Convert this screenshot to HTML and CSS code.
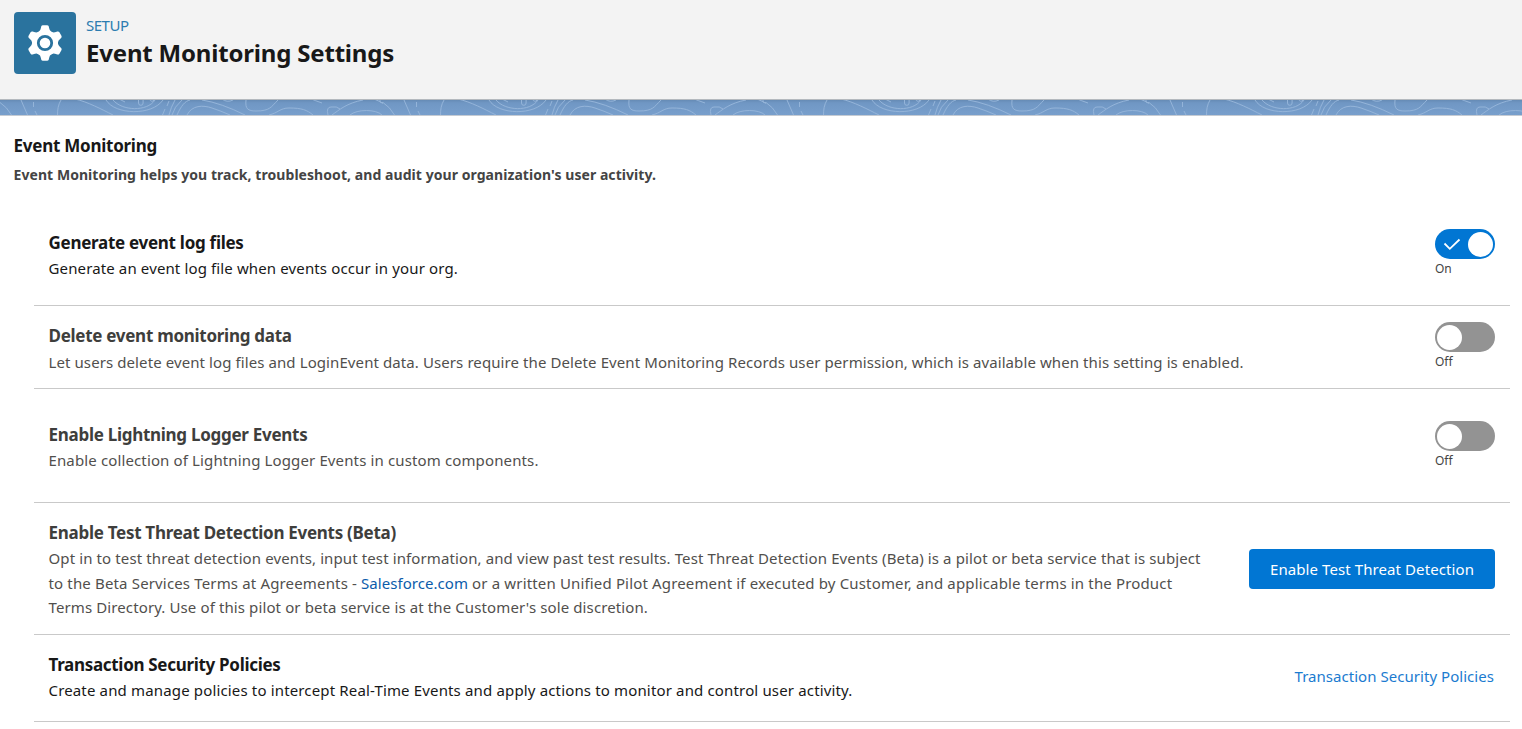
FILE: index.html
```html
<!DOCTYPE html>
<html lang="en">
<head>
<meta charset="utf-8">
<title>Event Monitoring Settings</title>
<link rel="stylesheet" href="styles.css">
</head>
<body>
<header class="page-header">
  <div class="header-icon">
    <svg width="62" height="62" viewBox="0 0 62 62">
      <g fill="#fff">
        <circle cx="31" cy="31" r="13"/>
        <g id="tooth-pair"><path d="M24.500 20Q26.600 18.500 26.900 16L27.200 14.600Q27.600 13.200 29 13.200H33Q34.400 13.200 34.800 14.600L35.100 16Q35.400 18.500 37.500 20V42Q35.400 43.500 35.100 46L34.800 47.400Q34.400 48.800 33 48.800H29Q27.600 48.800 27.200 47.400L26.900 46Q26.600 43.500 24.500 42Z"/></g>
        <use href="#tooth-pair" transform="rotate(60 31 31)"/>
        <use href="#tooth-pair" transform="rotate(120 31 31)"/>
      </g>
      <circle cx="31" cy="31" r="6.700" fill="#fff" stroke="#2a739e" stroke-width="2.800"/>
    </svg>
  </div>
  <div class="header-text">
    <div class="eyebrow">SETUP</div>
    <h1 class="page-title">Event Monitoring Settings</h1>
  </div>
</header>
<div class="band">
  <svg width="1522" height="15">
    <defs>
      <pattern id="contours" width="383" height="15" patternUnits="userSpaceOnUse">
        <g fill="none" stroke="#94b4d9" stroke-width="1">
          <path d="M0 2.500Q7 7 11.500 15"/>
          <path d="M21 0L27.500 15"/>
          <path d="M33.500 2v5M35 11l2 4"/>
          <path d="M61 0C58 5 57.500 10 57.500 15"/>
          <path d="M75-1C88 2 101 9 113 15"/>
          <path d="M106 0C115 15 152 16 163 0"/>
          <path d="M113 0C122 11 147 12 155 0"/>
          <path d="M119-1L125 2"/>
          <path d="M138.500 0v3a2.300 2.300 0 0 0 4.600 0v-3"/>
          <path d="M149-1Q152 3 154 0"/>
          <path d="M169 1l-2 5M165 9l-2.500 6"/>
          <path d="M175 0Q171 7 169 15M182 0Q174 7 172 15"/>
          <path d="M177 15C181 6 185 1 190 0"/>
          <path d="M187 15C192 5 203 5 212 8Q221 11 230 15"/>
          <path d="M202 0Q221 3 245 15"/>
          <path d="M222-1Q227 3 233 0"/>
          <path d="M246 0C245 9 248 11 256 11C270 11 271 7 278 0"/>
          <path d="M269 15C278 13 280 8 289 8C302 8 307 10 313 15"/>
          <path d="M309-2Q316 1 322 3"/>
          <path d="M328 15Q326 7 331 7Q337 6 340 9"/>
          <path d="M332 15C339 10 347 3 363 0M374-1Q388 4 394 15"/>
          <path d="M350 15C357 9 376 9 382 15"/>
          <path d="M380 0v2q1 1 3 .5"/>
        </g>
      </pattern>
    </defs>
    <rect width="1522" height="15" fill="url(#contours)"/>
  </svg>
</div>
<main class="content">
  <h2 class="section-title">Event Monitoring</h2>
  <p class="section-sub">Event Monitoring helps you track, troubleshoot, and audit your organization's user activity.</p>
  <div class="settings">
    <section class="row row-generate strong">
      <div class="row-text">
        <h3 class="row-title">Generate event log files</h3>
        <p class="row-desc">Generate an event log file when events occur in your org.</p>
      </div>
      <div class="toggle-box">
        <div class="toggle on">
          <svg class="check" width="18" height="14" viewBox="0 0 18 14"><path d="M1.500 6.500L6.800 11.800L16.500 2.500" fill="none" stroke="#fff" stroke-width="1.800"/></svg>
          <span class="knob"></span>
        </div>
        <div class="toggle-label">On</div>
      </div>
    </section>
    <section class="row row-delete">
      <div class="row-text">
        <h3 class="row-title">Delete event monitoring data</h3>
        <p class="row-desc">Let users delete event log files and LoginEvent data. Users require the Delete Event Monitoring Records user permission, which is available when this setting is enabled.</p>
      </div>
      <div class="toggle-box">
        <div class="toggle"><span class="knob"></span></div>
        <div class="toggle-label">Off</div>
      </div>
    </section>
    <section class="row row-logger">
      <div class="row-text">
        <h3 class="row-title">Enable Lightning Logger Events</h3>
        <p class="row-desc">Enable collection of Lightning Logger Events in custom components.</p>
      </div>
      <div class="toggle-box">
        <div class="toggle"><span class="knob"></span></div>
        <div class="toggle-label">Off</div>
      </div>
    </section>
    <section class="row row-threat">
      <div class="row-text">
        <h3 class="row-title">Enable Test Threat Detection Events (Beta)</h3>
        <p class="row-desc">Opt in to test threat detection events, input test information, and view past test results. Test Threat Detection Events (Beta) is a pilot or beta service that is subject<br><span class="terms">to the Beta Services Terms at Agreements - <a class="inline-link">Salesforce.com</a> or a written Unified Pilot Agreement if executed by Customer, and applicable terms in the Product</span><br>Terms Directory. Use of this pilot or beta service is at the Customer's sole discretion.</p>
      </div>
      <button class="button">Enable Test Threat Detection</button>
    </section>
    <section class="row row-policies strong">
      <div class="row-text">
        <h3 class="row-title">Transaction Security Policies</h3>
        <p class="row-desc">Create and manage policies to intercept Real-Time Events and apply actions to monitor and control user activity.</p>
      </div>
      <a class="action-link">Transaction Security Policies</a>
    </section>
  </div>
</main>
</body>
</html>
```
FILE: styles.css
```css
* { box-sizing: border-box; }
body {
  margin: 0;
  background: #fff;
  color: #181818;
  font-family: "Noto Sans", "Open Sans", sans-serif;
  font-size: 15px;
  overflow: hidden;
}
h1, h2, h3, p { margin: 0; }

.page-header {
  display: flex;
  gap: 10px;
  height: 99px;
  padding: 12px 14px;
  background: #f3f3f3;
}
.header-icon {
  width: 62px;
  height: 62px;
  border-radius: 4px;
  background: #2a739e;
}
.header-icon svg { display: block; }
.header-text { padding-top: 3px; }
.eyebrow {
  font-size: 15px;
  line-height: 20px;
  letter-spacing: -0.5px;
  color: #2c7cb0;
}
.page-title {
  font-size: 24px;
  line-height: 36px;
  letter-spacing: -0.19px;
  white-space: nowrap;
}

.band {
  height: 17px;
  border-top: 1px solid #b4b9be;
  border-bottom: 1px solid #c5cbd3;
  background: linear-gradient(#668bb5 0, #7097c4 3px, #789fcc 100%);
}
.band svg { display: block; }

.content { padding: 16px 12px 0 13.5px; }
.section-title {
  font-size: 17px;
  line-height: 28px;
  letter-spacing: -0.25px;
}
.section-sub {
  font-size: 14px;
  font-weight: 700;
  line-height: 30px;
  letter-spacing: 0.062px;
  color: #444;
}

.settings {
  margin: 22px 0 0 20.5px;
}
.row {
  display: flex;
  justify-content: space-between;
  padding: 0 15px 0 14.5px;
  border-bottom: 1px solid #c9c9c9;
  color: #514f4d;
}
.row-generate { height: 94px; padding-top: 17px; }
.row-delete { height: 83px; padding-top: 16px; }
.row-logger { height: 114px; padding-top: 32px; }
.row-threat { height: 132px; padding-top: 16px; }
.row-policies { height: 87px; padding-top: 16px; }
.row-title {
  font-size: 17px;
  line-height: 27px;
  letter-spacing: -0.28px;
  color: #3e3e3c;
}
.row-desc {
  line-height: 24.5px;
  letter-spacing: 0.112px;
  white-space: nowrap;
}
.row-delete .row-title { line-height: 28px; }
.row-delete .row-desc { letter-spacing: 0.092px; }
.row-generate .row-desc, .row-logger .row-desc { letter-spacing: 0.13px; }
.row-policies .row-desc { letter-spacing: 0.153px; }
.row-policies .row-title { letter-spacing: -0.307px; }
.strong, .strong .row-title { color: #181818; }
.terms { letter-spacing: 0.155px; }

.toggle-box { width: 60px; }
.toggle {
  display: flex;
  align-items: center;
  height: 30px;
  padding: 0 2px;
  border-radius: 15px;
  background: #939393;
}
.toggle.on {
  justify-content: space-between;
  padding-left: 8px;
  background: #0176d3;
}
.knob {
  width: 25px;
  height: 25px;
  border-radius: 50%;
  background: #fff;
}
.toggle-label {
  font-size: 12px;
  line-height: 20px;
  letter-spacing: -0.05px;
  color: #444;
}

.button {
  width: 246px;
  height: 40px;
  margin-top: 30px;
  padding: 0;
  border: 0;
  border-radius: 4px;
  background: #0176d3;
  color: #fff;
  font: inherit;
  letter-spacing: 0.088px;
}
.inline-link { color: #0b5cab; letter-spacing: 0.05px; }
.action-link {
  margin-top: 13px;
  line-height: 24px;
  letter-spacing: 0.041px;
  color: #1b7bd0;
  padding-right: 1px;
}
```
